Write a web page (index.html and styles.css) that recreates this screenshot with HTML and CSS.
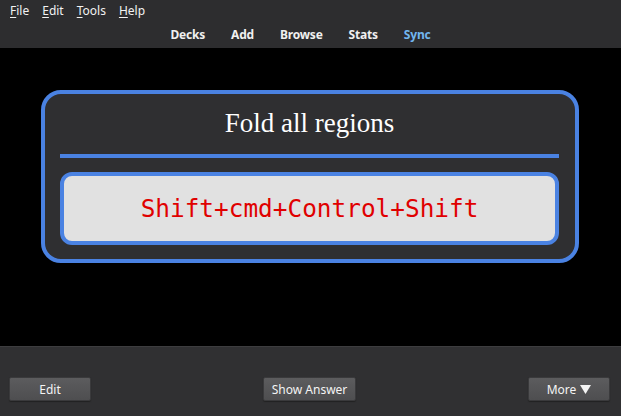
FILE: index.html
```html
<!DOCTYPE html>
<html>
<head>
<meta charset="utf-8">
<link rel="stylesheet" href="styles.css">
</head>
<body>
<div class="app">
  <header class="top">
    <nav class="menubar">
      <span class="menu"><u>F</u>ile</span>
      <span class="menu"><u>E</u>dit</span>
      <span class="menu"><u>T</u>ools</span>
      <span class="menu"><u>H</u>elp</span>
    </nav>
    <nav class="toolbar">
      <span class="tool">Decks</span>
      <span class="tool">Add</span>
      <span class="tool">Browse</span>
      <span class="tool">Stats</span>
      <span class="tool sync">Sync</span>
    </nav>
  </header>
  <main class="main">
    <div class="card">
      <div class="title">Fold all regions</div>
      <div class="rule"></div>
      <div class="shortcut">Shift+cmd+Control+Shift</div>
    </div>
  </main>
  <footer class="bottom">
    <button class="btn">Edit</button>
    <button class="btn">Show Answer</button>
    <button class="btn">More <svg class="arrow" width="11" height="9" viewBox="0 0 11 9"><path d="M0 0H11L5.5 9Z" fill="#f4f4f4"/></svg></button>
  </footer>
</div>
</body>
</html>
```
FILE: styles.css
```css
*, *::before, *::after {
  box-sizing: border-box;
}
html, body {
  margin: 0;
  padding: 0;
  background: #000;
}
.app {
  width: 621px;
  height: 416px;
  display: flex;
  flex-direction: column;
  overflow: hidden;
}
.top {
  background: #2d2d2f;
  height: 48px;
  flex: none;
  display: flex;
  flex-direction: column;
}
.menubar {
  height: 21px;
  display: flex;
  align-items: center;
  gap: 13px;
  padding-left: 10px;
  font-family: "Noto Sans", sans-serif;
  font-size: 12px;
  color: #f2f2f2;
}
.menu u {
  text-decoration-thickness: 1px;
  text-underline-offset: 2px;
}
.toolbar {
  height: 27px;
  display: flex;
  justify-content: center;
  align-items: center;
  gap: 26px;
  padding-right: 20px;
  font-family: "Noto Sans", sans-serif;
  font-weight: bold;
  font-size: 12px;
  color: #f0f0f0;
  letter-spacing: -0.2px;
}
.sync {
  color: #72b6ef;
}
.main {
  flex: 1;
  background: #000;
  display: flex;
  flex-direction: column;
  align-items: flex-start;
  padding: 42px 0 0 41px;
}
.card {
  width: 538px;
  background: #2f2f31;
  border: 4px solid #4a82e2;
  border-radius: 20px;
  padding: 14px 16px 14px 15px;
}
.title {
  font-family: "Liberation Serif", serif;
  font-size: 27px;
  line-height: 31px;
  color: #fff;
  text-align: center;
}
.rule {
  height: 4px;
  background: #4a82e2;
  margin-top: 15px;
  margin-bottom: 14px;
}
.shortcut {
  background: #e1e1e1;
  border: 4px solid #4a82e2;
  border-radius: 12px;
  height: 73px;
  display: flex;
  align-items: center;
  justify-content: center;
  font-family: "DejaVu Sans Mono", monospace;
  font-size: 24.4px;
  color: #e00000;
}
.bottom {
  height: 70px;
  flex: none;
  background: #303032;
  border-top: 1px solid #3d3d3f;
  display: flex;
  justify-content: space-between;
  align-items: flex-start;
  padding: 30px 11px 0 9px;
}
.btn {
  height: 24px;
  width: 82px;
  padding: 0 8px;
  background: linear-gradient(#5c5c5e, #4e4e50);
  border: 1px solid #3a3a3c;
  border-radius: 2px;
  color: #f4f4f4;
  font-family: "Noto Sans", sans-serif;
  font-size: 12px;
  box-shadow: 0 1px 1px #222;
  display: flex;
  align-items: center;
  justify-content: center;
  gap: 4px;
  white-space: nowrap;
}
.btn:nth-child(2) {
  width: 93px;
}
.arrow {
  display: block;
}
```
